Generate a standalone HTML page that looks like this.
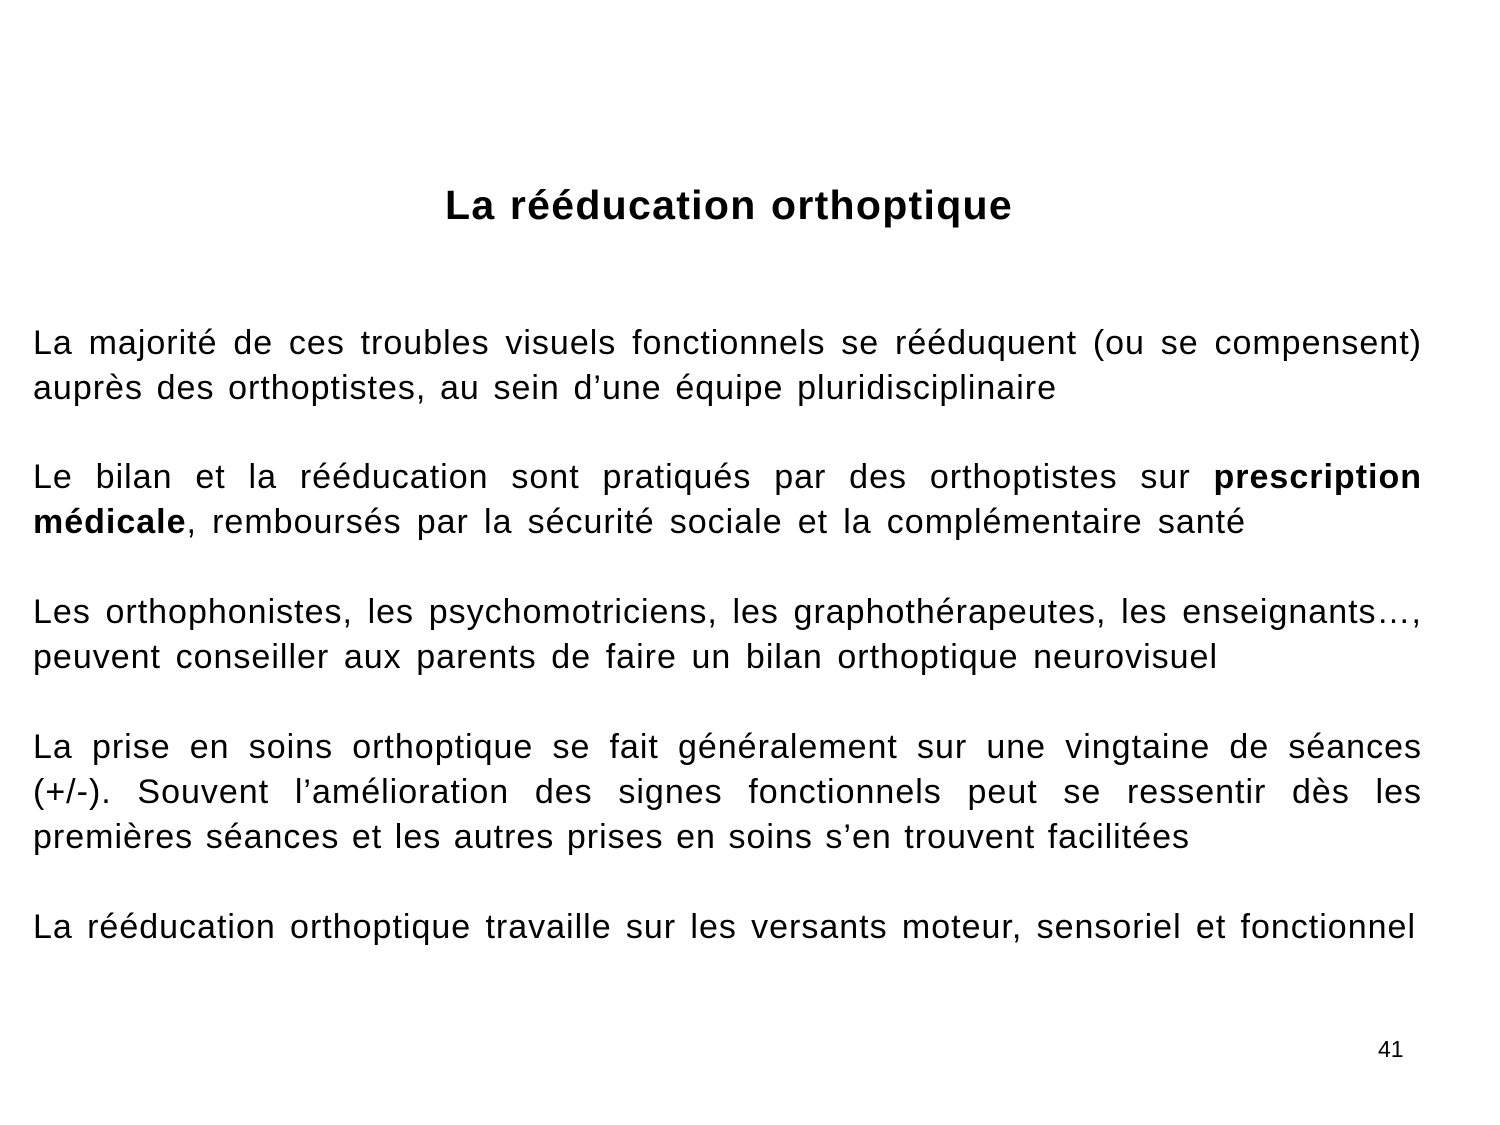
<!DOCTYPE html>
<html><head><meta charset="utf-8"><style>
body{margin:0;width:1500px;height:1125px;background:#fff;position:relative;overflow:hidden;font-family:"Liberation Sans",sans-serif;color:#000}
.l{position:absolute;left:33px;font-size:34px;letter-spacing:1px;line-height:40px;height:40px;white-space:nowrap;text-align:justify;text-align-last:justify;overflow:visible}
.t{position:absolute;left:445px;width:568px;top:182px;font-size:41px;letter-spacing:1.3px;font-weight:bold;line-height:46px;text-align:justify;text-align-last:justify;white-space:nowrap}
.n{position:absolute;left:1378px;top:1036px;font-size:23px;line-height:26px}
</style></head><body>
<div class="t">La rééducation orthoptique</div>
<div class="l" style="top:323px;width:1389px">La majorité de ces troubles visuels fonctionnels se rééduquent (ou se compensent)</div>
<div class="l" style="top:368px;width:1024px">auprès des orthoptistes, au sein d’une équipe pluridisciplinaire</div>
<div class="l" style="top:457px;width:1389px">Le bilan et la rééducation sont pratiqués par des orthoptistes sur <b>prescription</b></div>
<div class="l" style="top:502px;width:1213px"><b>médicale</b>, remboursés par la sécurité sociale et la complémentaire santé</div>
<div class="l" style="top:592px;width:1389px">Les orthophonistes, les psychomotriciens, les graphothérapeutes, les enseignants…,</div>
<div class="l" style="top:637px;width:1185px">peuvent conseiller aux parents de faire un bilan orthoptique neurovisuel</div>
<div class="l" style="top:727px;width:1389px">La prise en soins orthoptique se fait généralement sur une vingtaine de séances</div>
<div class="l" style="top:772px;width:1389px">(+/-). Souvent l’amélioration des signes fonctionnels peut se ressentir dès les</div>
<div class="l" style="top:817px;width:1157px">premières séances et les autres prises en soins s’en trouvent facilitées</div>
<div class="l" style="top:907px;width:1383px">La rééducation orthoptique travaille sur les versants moteur, sensoriel et fonctionnel</div>
<div class="n">41</div>
</body></html>
